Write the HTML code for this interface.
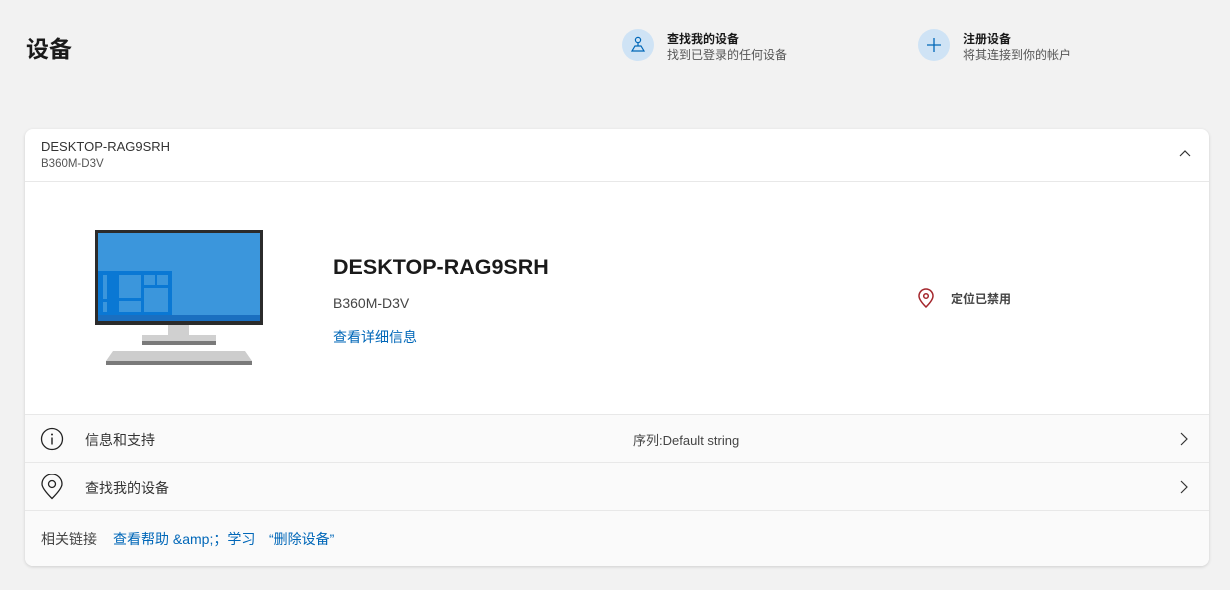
<!DOCTYPE html>
<html><head><meta charset="utf-8"><style>
*{box-sizing:border-box;margin:0;padding:0}
body{width:1230px;height:590px;background:#f2f2f2;font-family:"Liberation Sans","Noto Sans CJK SC",sans-serif;color:#1a1a1a;position:relative;overflow:hidden}
.abs{position:absolute}
h1{position:absolute;left:26px;top:30px;font-size:23px;font-weight:bold;color:#1a1a1a}
.circ{position:absolute;width:32px;height:32px;border-radius:50%;background:#cfe3f5}
.t1{font-size:12px;font-weight:bold;color:#1a1a1a}
.t2{font-size:12px;color:#555}
.card{position:absolute;left:25px;top:129px;width:1184px;height:437px;background:#fff;border-radius:8px;box-shadow:0 1px 3px rgba(0,0,0,.15);overflow:hidden}
.row{position:absolute;left:0;width:1184px;background:#fafafa;border-top:1px solid #e8e8e8}
.link{color:#0067b8}
</style></head><body>
<h1>设备</h1>
<div class="circ" style="left:622px;top:29px"></div>
<svg class="abs" style="left:630px;top:36px" width="16" height="18" viewBox="0 0 16 18"><circle cx="8" cy="4" r="2.6" fill="none" stroke="#0067b8" stroke-width="1.2"/><path d="M8 6.6V10M5 10h6l3 5H2z" fill="none" stroke="#0067b8" stroke-width="1.2"/></svg>
<div class="abs t1" style="left:667px;top:30px">查找我的设备</div>
<div class="abs t2" style="left:667px;top:46px">找到已登录的任何设备</div>
<div class="circ" style="left:918px;top:29px"></div>
<svg class="abs" style="left:926px;top:37px" width="16" height="16"><path d="M8 1v14M1 8h14" stroke="#0067b8" stroke-width="1.3"/></svg>
<div class="abs t1" style="left:963px;top:30px">注册设备</div>
<div class="abs t2" style="left:963px;top:46px">将其连接到你的帐户</div>

<div class="card">
<div class="abs" style="left:16px;top:10px;font-size:13px;color:#333">DESKTOP-RAG9SRH</div>
<div class="abs" style="left:16px;top:29px;font-size:11.5px;color:#555">B360M-D3V</div>
<svg class="abs" style="left:1154px;top:20px" width="12" height="10"><path d="M1 7l5-5 5 5" fill="none" stroke="#333" stroke-width="1.2"/></svg>
<div class="abs" style="left:0;top:52px;width:1184px;border-top:1px solid #e8e8e8"></div>

<svg class="abs" style="left:68px;top:100px" width="172" height="138" viewBox="0 0 172 138">
<rect x="2" y="1" width="168" height="95" fill="#2b2b2b"/>
<rect x="5" y="4" width="162" height="88" fill="#3b96dc"/>
<rect x="5" y="42" width="74" height="50" fill="#0a78d4"/>
<rect x="5" y="86" width="162" height="6" fill="#1a6fc0"/>
<rect x="10" y="46" width="4" height="24" fill="#3b96dc"/><rect x="10" y="73" width="4" height="10" fill="#3b96dc"/>
<rect x="26" y="46" width="22" height="23" fill="#3b96dc"/><rect x="26" y="72" width="22" height="11" fill="#3b96dc"/>
<rect x="51" y="46" width="11" height="10" fill="#3b96dc"/><rect x="64" y="46" width="11" height="10" fill="#3b96dc"/>
<rect x="51" y="59" width="24" height="24" fill="#3b96dc"/>
<rect x="75" y="96" width="21" height="11" fill="#d0d0d0"/>
<rect x="49" y="106" width="74" height="7" fill="#d0d0d0"/><rect x="49" y="112" width="74" height="4" fill="#7a7a7a"/>
<path d="M20 122h132l7 10H13z" fill="#cdcdcd"/><rect x="13" y="132" width="146" height="4" fill="#7a7a7a"/>
</svg>

<div class="abs" style="left:308px;top:126px;font-size:21.5px;font-weight:bold;color:#1a1a1a">DESKTOP-RAG9SRH</div>
<div class="abs" style="left:308px;top:166px;font-size:14px;color:#444">B360M-D3V</div>
<div class="abs link" style="left:308px;top:198px;font-size:14px">查看详细信息</div>

<svg class="abs" style="left:892px;top:159px" width="18" height="20" viewBox="0 0 18 20"><path d="M9 19C4 14 2 10.5 2 8a7 7 0 0 1 14 0c0 2.5-2 6-7 11z" fill="none" stroke="#a4262c" stroke-width="1.5"/><circle cx="9" cy="8" r="2.3" fill="none" stroke="#a4262c" stroke-width="1.5"/></svg>
<div class="abs" style="left:926px;top:161px;font-size:12px;font-weight:bold;color:#444">定位已禁用</div>

<div class="row" style="top:285px;height:48px">
<svg class="abs" style="left:15px;top:12px" width="24" height="24" viewBox="0 0 24 24"><circle cx="12" cy="12" r="10.5" fill="none" stroke="#222" stroke-width="1.3"/><circle cx="12" cy="7.5" r="1" fill="#222"/><path d="M12 10.5v7" stroke="#222" stroke-width="1.4"/></svg>
<div class="abs" style="left:60px;top:15px;font-size:14px;color:#333">信息和支持</div>
<div class="abs" style="left:608px;top:15px;font-size:13px;color:#444">序列:Default string</div>
<svg class="abs" style="left:1154px;top:17px" width="10" height="14"><path d="M2 1l6 6-6 6" fill="none" stroke="#333" stroke-width="1.2"/></svg>
</div>
<div class="row" style="top:333px;height:48px">
<svg class="abs" style="left:15px;top:11px" width="24" height="26" viewBox="0 0 24 26"><path d="M12 24.5C5.5 18 2 13.5 2 10a10 10 0 0 1 20 0c0 3.5-3.5 8-10 14.5z" fill="none" stroke="#222" stroke-width="1.3"/><circle cx="12" cy="10" r="3.5" fill="none" stroke="#222" stroke-width="1.3"/></svg>
<div class="abs" style="left:60px;top:15px;font-size:14px;color:#333">查找我的设备</div>
<svg class="abs" style="left:1154px;top:17px" width="10" height="14"><path d="M2 1l6 6-6 6" fill="none" stroke="#333" stroke-width="1.2"/></svg>
</div>
<div class="row" style="top:381px;height:56px">
<div class="abs" style="left:16px;top:18px;font-size:14px;color:#444">相关链接</div>
<div class="abs link" style="left:88px;top:18px;font-size:14px">查看帮助 &amp;amp;；学习</div>
<div class="abs link" style="left:244px;top:18px;font-size:14px">“删除设备”</div>
</div>
</div>
</body></html>
